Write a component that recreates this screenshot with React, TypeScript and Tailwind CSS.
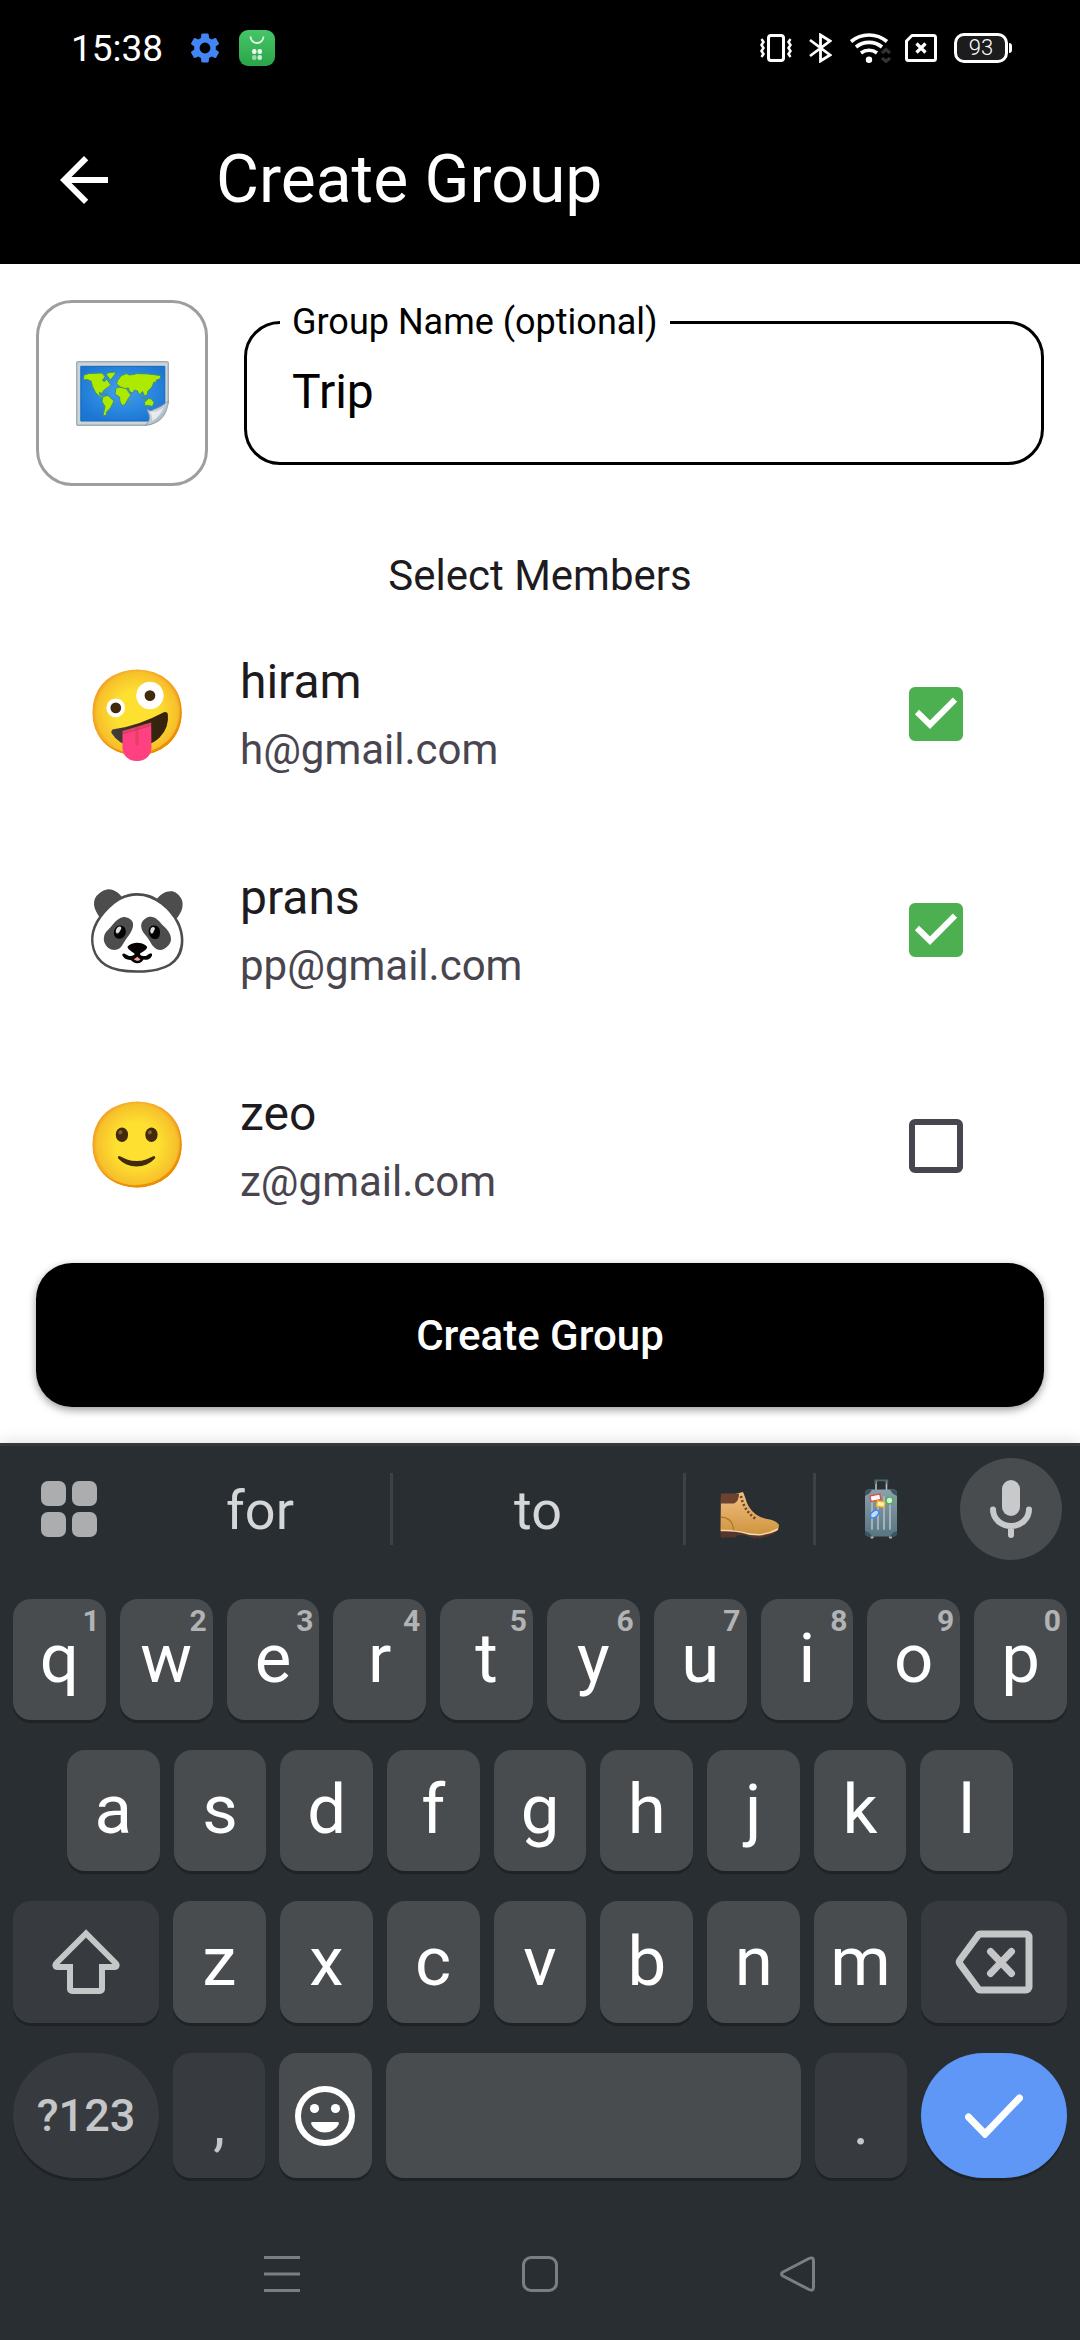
import { useState } from "react";
import type { ReactNode } from "react";

const EMOJI = "font-['Noto_Color_Emoji',sans-serif]";

type Member = { emoji: string; name: string; email: string; selected: boolean };

const MEMBERS: Member[] = [
  { emoji: "🤪", name: "hiram", email: "h@gmail.com", selected: true },
  { emoji: "🐼", name: "prans", email: "pp@gmail.com", selected: true },
  { emoji: "🙂", name: "zeo", email: "z@gmail.com", selected: false },
];

function WorldMapIcon() {
  return (
    <svg className="h-[65px] w-[93px]" viewBox="0 0 93 65" aria-hidden="true">
      <defs>
        <radialGradient id="sea" cx="0.5" cy="0.45" r="0.6">
          <stop offset="0" stopColor="#42a0f0" />
          <stop offset="1" stopColor="#1a76d2" />
        </radialGradient>
        <linearGradient id="curl" x1="0" y1="0" x2="1" y2="1">
          <stop offset="0.2" stopColor="#dfe4e7" />
          <stop offset="0.5" stopColor="#c3cdd3" />
          <stop offset="1" stopColor="#8c9ba3" />
        </linearGradient>
      </defs>
      <path d="M2 .7h89q1.300 0 1.300 1.500V41Q84 63 69 64.300H2Q.7 64.300.7 63V2Q.7.7 2 .7z" fill="#ccd4d9" stroke="#9fadb4" strokeWidth="1.400" />
      <path d="M4.800 5.300h84V44L75 60H4.800z" fill="url(#sea)" stroke="#1768b5" strokeWidth="1" />
      <g fill="#aeea00" stroke="#3f8f7a" strokeWidth="1" strokeLinejoin="round">
        <path d="M8 14l5-1.500 13-.5 3 3.500-2.500 4 2 1 2-2.500 4.500 6-4 3-3.500 2.500-1 3-3-1 .5 3 3 .5.5 2-4-1.500-4-4-3-6-1.500-5.500-4-1.500-3.500.5z" />
        <path d="M30 13l3-1.500 7-.5-1.500 3-4 5-2.500-3z" />
        <path d="M27 35.500l5-1 6 5.500-3.500 7-4 4-.5 3.500h-3l2-9-3-5z" />
        <path d="M40 27l4-1 6 1 4 6h1.500l-3.500 5-3 5.500-3 1-2-4-.5-4.500-4.500-3z" />
        <path d="M40.500 23l1-3.500 4-5 5-2 3 1.500 8-1.500 11 .5 12 1.500v3l-4 1.500-1 3-1.500-1-2 5-4 4-1 4-2.500 1-2-4.500-3 3.500-2-4-3-1-2 3-3-1.500-1-3.500-4 .5-4-1.500z" />
        <path d="M68.500 41l4-3.500 3 .5 2.500 3.500-1.500 4-4-1-3.500.5zM65 36l5 2-1 .8zM53 41.500l1.500-1.500-.5 3.500zM26 32l6 1.500" />
        <path d="M82 45l2-1.500" />
      </g>
      <path d="M71 48.500l3.500 1.500Q86 46 92.500 40 90 63 69 64.300 77 59 71 48.500z" fill="url(#curl)" stroke="#8c9ba3" strokeWidth=".9" />
      <path d="M74 51q8 .5 14-5-4 10-12 14 1-5-2-9z" fill="#f0f3f5" opacity=".8" />
    </svg>
  );
}

function BootIcon() {
  return (
    <svg className="h-[47px] w-[60px]" viewBox="0 0 60 47" aria-hidden="true">
      <defs>
        <linearGradient id="leather" x1="0" y1="0" x2="0" y2="1">
          <stop offset="0" stopColor="#f3c083" />
          <stop offset="1" stopColor="#cf943f" />
        </linearGradient>
      </defs>
      <path d="M.5 38v7l3 1 2-1 3 1 3-1 3 1 3-2.500 6-.5 7 2 4 1.500 3-1 3 .8 3-1.500 3 .3 3-2 3-.3 5-4z" fill="#54362c" />
      <path d="M1 2h14l8-2 2 5q3 12 11 17.500 5 3.500 14 5 7 1.500 9 5.500 0 6-5 7-8 2.500-16 2.500-9-.5-17-3.500-7-1.500-20.500-1z" fill="url(#leather)" />
      <path d="M1 1.500h18q0 8-5 10H.8z" fill="#6d4330" />
      <path d="M.7 38.500q13-.5 21 1.500 8 3 18 2.800Q49 42 58 37" fill="none" stroke="#f6d9a8" strokeWidth="1.500" />
      <path d="M1 25q12 1 12.500 13" fill="none" stroke="#b07b26" strokeWidth="1.300" />
      <path d="M21 4q3 15 15 23" fill="none" stroke="#68462c" strokeWidth="2.600" strokeDasharray="2 2.200" />
    </svg>
  );
}

function SuitcaseIcon() {
  return (
    <svg className="h-[60px] w-8" viewBox="0 0 32 60" aria-hidden="true">
      <defs>
        <linearGradient id="shell" x1="0" y1="0" x2="0" y2="1">
          <stop offset="0" stopColor="#8ba0aa" />
          <stop offset="1" stopColor="#587581" />
        </linearGradient>
      </defs>
      <path d="M11 11V1.500M21.500 11V1.500" stroke="#b3bec4" strokeWidth="1.600" />
      <path d="M10.300 5V1.300h12V5" fill="none" stroke="#4c6570" strokeWidth="1.800" />
      <circle cx="7" cy="58" r="1.700" fill="#c5a8a0" />
      <circle cx="25.500" cy="58" r="1.700" fill="#c5a8a0" />
      <rect y="10.500" width="32" height="47" rx="4" fill="url(#shell)" />
      <path d="M0 17v-3q0-3.500 3.500-3.500H7Q5 15 0 17zM32 17v-3q0-3.500-3.500-3.500H25q2 4.500 7 6.500zM0 52v2q0 3.500 3.500 3.500H7Q5 53 0 52zM32 52v2q0 3.500-3.500 3.500H25q2-4.500 7-5.500z" fill="#3d5561" />
      <path d="M7 18v32M13 18v32M19 18v32M25 18v32" stroke="#a8b8c0" strokeWidth="1.800" strokeLinecap="round" />
      <rect x="5.500" y="16" width="10" height="5.500" fill="#fff" stroke="#e5483d" strokeWidth="1.300" transform="rotate(-12 10.500 19)" />
      <rect x="12" y="22.500" width="7.500" height="5" fill="#fff3c4" stroke="#fbb917" strokeWidth="1.400" transform="rotate(10 15.500 25)" />
      <circle cx="24.500" cy="21.500" r="3.300" fill="#d3f5d5" stroke="#45b255" strokeWidth="1.300" />
      <ellipse cx="9.600" cy="35" rx="4.800" ry="2.900" fill="#bfdcff" stroke="#3f84f0" strokeWidth="1.400" transform="rotate(-42 9.600 35)" />
    </svg>
  );
}

function StatusBar() {
  return (
    <div className="flex h-24 items-center justify-between pr-[68px] pl-[71px] text-white">
      <div className="flex items-center">
        <span className="text-[37px] leading-none">15:38</span>
        <svg className="ml-[27px] size-[30px]" viewBox="2 2 20 20" fill="#4285f4" aria-hidden="true">
          <path d="M19.14 12.94c.04-.3.06-.61.06-.94 0-.32-.02-.64-.07-.94l2.03-1.58a.49.49 0 0 0 .12-.61l-1.92-3.32a.488.488 0 0 0-.59-.22l-2.39.96c-.5-.38-1.03-.7-1.62-.94l-.36-2.54a.484.484 0 0 0-.48-.41h-3.84c-.24 0-.43.17-.47.41l-.36 2.54c-.59.24-1.13.57-1.62.94l-2.39-.96c-.22-.08-.47 0-.59.22L2.74 8.87c-.12.21-.08.47.12.61l2.03 1.58c-.05.3-.09.63-.09.94s.02.64.07.94l-2.03 1.58a.49.49 0 0 0-.12.61l1.92 3.32c.12.22.37.29.59.22l2.39-.96c.5.38 1.03.7 1.62.94l.36 2.54c.05.24.24.41.48.41h3.84c.24 0 .44-.17.47-.41l.36-2.54c.59-.24 1.13-.56 1.62-.94l2.39.96c.22.08.47 0 .59-.22l1.92-3.32c.12-.22.07-.47-.12-.61l-2.01-1.58zM12 15.6A3.6 3.6 0 1 1 12 8.4a3.6 3.6 0 0 1 0 7.2z" />
        </svg>
        <svg className="ml-[19px] size-9" viewBox="0 0 36 36" aria-hidden="true">
          <defs>
            <linearGradient id="market" x1="0" y1="0" x2="0" y2="1">
              <stop offset="0" stopColor="#45c665" />
              <stop offset="1" stopColor="#2aa54a" />
            </linearGradient>
          </defs>
          <rect width="36" height="36" rx="9" fill="url(#market)" />
          <path d="M11.5 6.5a6.5 6.5 0 0 0 13 0" fill="none" stroke="#e3f8e6" strokeWidth="1.8" />
          <rect x="13" y="19" width="4.5" height="5" rx="2" fill="#e9faeb" />
          <rect x="18.5" y="19" width="4.5" height="5" rx="2" fill="#e9faeb" />
          <rect x="13" y="25" width="4.5" height="5" rx="2" fill="#95d9a4" />
          <rect x="18.5" y="25" width="4.5" height="5" rx="2" fill="#c8efcf" />
        </svg>
      </div>
      <div className="flex items-center">
        <svg className="h-[30px] w-8" viewBox="0 0 32 30" fill="none" stroke="#fff" aria-hidden="true">
          <rect x="8.500" y="2.500" width="15" height="25" rx="2.500" strokeWidth="3" />
          <path d="M1.500 6l2 3-2 3 2 3-2 3 2 3-2 3M30.500 6l-2 3 2 3-2 3 2 3-2 3 2 3" strokeWidth="2.500" />
        </svg>
        <svg className="ml-4 h-[30px] w-6" viewBox="0 0 24 30" fill="none" stroke="#fff" strokeWidth="2.800" aria-hidden="true">
          <path d="M2 7l20 15-9.500 6V2L22 8 2 23" />
        </svg>
        <svg className="ml-[18px] h-[30px] w-[42px]" viewBox="0 0 42 30" fill="none" aria-hidden="true">
          <path d="M1 8.500a28 28 0 0 1 36 0M6 14a20.500 20.500 0 0 1 26 0M11 20a13 13 0 0 1 16 0" stroke="#fff" strokeWidth="3.600" />
          <circle cx="19" cy="26.700" r="3.200" fill="#fff" />
          <path d="M32 20l4-3.500 4 3.500M32 25l4 3.500 4-3.500" stroke="#333" strokeWidth="3" />
        </svg>
        <svg className="ml-[13px] h-[30px] w-8" viewBox="0 0 32 30" fill="none" stroke="#fff" aria-hidden="true">
          <path d="M7 2.500h21.500a2 2 0 0 1 2 2v21a2 2 0 0 1-2 2h-25a2 2 0 0 1-2-2V8z" strokeWidth="3" strokeLinejoin="round" />
          <path d="M11.500 10.500l9 9M20.500 10.500l-9 9" strokeWidth="3.200" />
        </svg>
        <div className="ml-[17px] flex h-[30px] w-[54px] items-center justify-center rounded-[10px] border-3 border-white bg-[#1c1c1c] text-[22px] leading-none font-light">
          93
        </div>
        <div className="ml-px h-[10px] w-[3px] rounded-r-sm bg-white" />
      </div>
    </div>
  );
}

function MemberRow({ member, onToggle }: { member: Member; onToggle: () => void }) {
  return (
    <label className="flex h-54 items-center pr-[117px] pl-21">
      <span className={`flex w-27 shrink-0 justify-center text-[84px] leading-none ${EMOJI}`}>{member.emoji}</span>
      <span className="ml-12 flex min-w-0 flex-1 flex-col pt-1">
        <span className="text-[48px] leading-[68px] text-[#1d1b20]">{member.name}</span>
        <span className="text-[42px] leading-[68px] text-[#49454f]">{member.email}</span>
      </span>
      <span className="relative size-[54px] shrink-0">
        <input
          type="checkbox"
          checked={member.selected}
          onChange={onToggle}
          className="peer block size-full appearance-none rounded-md border-6 border-[#49454f] checked:border-[#4caf50] checked:bg-[#4caf50]"
        />
        <svg
          className="pointer-events-none absolute inset-0 hidden size-full peer-checked:block"
          viewBox="0 0 54 54"
          fill="none"
          stroke="#fff"
          strokeWidth="6"
          aria-hidden="true"
        >
          <path d="M8 25l13 12.700L46 12.700" />
        </svg>
      </span>
    </label>
  );
}

function Key({
  children,
  label,
  hint,
  tone = "light",
  onPress,
}: {
  children?: ReactNode;
  label: string;
  hint?: string;
  tone?: "light" | "dark" | "space";
  onPress?: () => void;
}) {
  const tones = {
    light: "flex-1 bg-[#484c4f] text-white",
    dark: "flex-1 bg-[#373b3f] text-[#c4c6c8]",
    space: "w-[415px] shrink-0 bg-[#484c4f]",
  };
  return (
    <button
      type="button"
      aria-label={label}
      onClick={onPress}
      className={`relative flex h-full min-w-0 items-center justify-center rounded-[18px] text-[69px] leading-none shadow-[0_3px_0_#1f2326] ${tones[tone]}`}
    >
      {children}
      {hint && <span className="absolute top-[7px] right-[6px] text-[30px] leading-none font-bold text-[#b1b3b5]">{hint}</span>}
    </button>
  );
}

const WIDE = "flex h-full w-[146px] shrink-0 items-center justify-center shadow-[0_3px_0_#1f2326]";

function Keyboard({ onType, onDelete }: { onType: (text: string) => void; onDelete: () => void }) {
  const letters = (row: string, hints = "") =>
    row.split("").map((c, i) => (
      <Key key={c} label={c} hint={hints[i]} onPress={() => onType(c)}>
        <span className="pb-[2px]">{c}</span>
      </Key>
    ));
  return (
    <section aria-label="Keyboard" className="border-t-3 border-[#34393c] bg-[#292e32] shadow-[0_0_15px_rgba(0,0,0,0.15)]">
      <div className="flex h-[126px] items-center text-[54px] leading-none text-[#d5d6d7]">
        <button type="button" aria-label="Keyboard menu" className="flex w-[130px] shrink-0 pl-[41px]">
          <span className="grid grid-cols-2 gap-[6px]">
            <span className="size-[25px] rounded-[7px] bg-[#abadaf]" />
            <span className="size-[25px] rounded-[7px] bg-[#abadaf]" />
            <span className="size-[25px] rounded-[7px] bg-[#abadaf]" />
            <span className="size-[25px] rounded-[7px] bg-[#abadaf]" />
          </span>
        </button>
        <button type="button" className="h-18 w-[260px] pt-1">for</button>
        <span className="h-18 w-[3px] bg-[#3d4246]" />
        <button type="button" className="h-18 flex-1 pt-1">to</button>
        <span className="h-18 w-[3px] bg-[#3d4246]" />
        <button type="button" aria-label="Hiking boot emoji" onClick={() => onType("🥾")} className="flex h-18 w-[127px] items-center justify-center pt-3">
          <BootIcon />
        </button>
        <span className="h-18 w-[3px] bg-[#3d4246]" />
        <button type="button" aria-label="Luggage emoji" onClick={() => onType("🧳")} className="flex h-18 w-[130px] items-center justify-center">
          <SuitcaseIcon />
        </button>
        <button type="button" aria-label="Voice input" className="mr-[18px] ml-[14px] flex size-[102px] shrink-0 items-center justify-center rounded-full bg-[#484c4f]">
          <svg className="h-[58px] w-[42px]" viewBox="0 0 42 58" aria-hidden="true">
            <rect x="12" width="18" height="36" rx="9" fill="#c8c9cb" />
            <path d="M3 29.500a18 16.500 0 0 0 36 0M21 47v8" fill="none" stroke="#c8c9cb" strokeWidth="6" strokeLinecap="round" />
          </svg>
        </button>
      </div>

      <div className="flex flex-col gap-[30px] px-[13px] pt-[27px]">
        <div className="flex h-[121px] gap-[14px]">{letters("qwertyuiop", "1234567890")}</div>
        <div className="flex h-[121px] gap-[14px] px-[54px]">{letters("asdfghjkl")}</div>
        <div className="flex h-[122px] gap-[14px]">
          <button type="button" aria-label="Shift" className={`${WIDE} rounded-[18px] bg-[#373b3f]`}>
            <svg className="h-[66px] w-[68px]" viewBox="0 0 68 66" fill="none" stroke="#c4c6c8" strokeWidth="6" aria-hidden="true">
              <path d="M34 4.500L4.500 34c-2 2-1 4 1 4H18v22a2 2 0 0 0 2 2h28a2 2 0 0 0 2-2V38h12.500c2 0 3-2 1-4z" />
            </svg>
          </button>
          {letters("zxcvbnm")}
          <button type="button" aria-label="Backspace" onClick={onDelete} className={`${WIDE} rounded-[18px] bg-[#373b3f]`}>
            <svg className="h-16 w-[78px]" viewBox="0 0 78 64" fill="none" stroke="#c4c6c8" strokeWidth="7" strokeLinejoin="round" strokeLinecap="round" aria-hidden="true">
              <path d="M26 4h45a3 3 0 0 1 3 3v50a3 3 0 0 1-3 3H26a3 3 0 0 1-3-1.500L5 34q-1.500-2 0-4L23 5.500A3 3 0 0 1 26 4z" />
              <path d="M35.500 21.500l21 22M56.500 21.500l-21 22" />
            </svg>
          </button>
        </div>
        <div className="flex h-[125px] gap-[14px]">
          <button type="button" className={`${WIDE} rounded-full bg-[#373b3f] text-[45px] leading-none font-medium text-[#c4c6c8]`}>
            ?123
          </button>
          <Key label="Comma" tone="dark" onPress={() => onType(",")}>
            <span className="pt-4 text-[60px]">,</span>
          </Key>
          <Key label="Emoji">
            <svg className="size-15" viewBox="0 0 60 60" aria-hidden="true">
              <circle cx="30" cy="30" r="27" fill="none" stroke="#fff" strokeWidth="6" />
              <circle cx="19.500" cy="22.500" r="4.600" fill="#fff" />
              <circle cx="40.500" cy="22.500" r="4.600" fill="#fff" />
              <path d="M17.500 36h25q2 0 1.300 2C41 43.500 36 46.500 30 46.500S19 43.500 16.200 38q-.7-2 1.300-2z" fill="#fff" />
            </svg>
          </Key>
          <Key label="Space" tone="space" onPress={() => onType(" ")} />
          <Key label="Period" tone="dark" onPress={() => onType(".")}>
            <span className="pt-4 text-[60px]">.</span>
          </Key>
          <button type="button" aria-label="Done" className={`${WIDE} rounded-full bg-[#5e97f6]`}>
            <svg className="h-[44px] w-[58px]" viewBox="0 0 58 44" fill="none" stroke="#fff" strokeWidth="7" strokeLinecap="round" aria-hidden="true">
              <path d="M3.500 23L20 40 54.500 4" strokeLinejoin="miter" />
            </svg>
          </button>
        </div>
      </div>

      <nav aria-label="System" className="flex h-[162px] items-center justify-center gap-[222px] pt-[30px] text-[#7b7f82]">
        <button type="button" aria-label="Recent apps">
          <svg className="size-9" viewBox="0 0 36 36" stroke="currentColor" strokeWidth="3" aria-hidden="true">
            <path d="M0 1.500h36M0 18h36M0 34.500h36" />
          </svg>
        </button>
        <button type="button" aria-label="Home" className="size-9 rounded-[9px] border-3 border-current" />
        <button type="button" aria-label="Back">
          <svg className="size-9" viewBox="0 0 36 36" fill="none" stroke="currentColor" strokeWidth="3" strokeLinejoin="round" aria-hidden="true">
            <path d="M29 2.500q4.500-2 4.500 2.500v26q0 4.500-4.500 2.500L3 20q-3-2 0-4z" />
          </svg>
        </button>
      </nav>
    </section>
  );
}

export default function App() {
  const [name, setName] = useState("Trip");
  const [members, setMembers] = useState(MEMBERS);

  const toggle = (index: number) =>
    setMembers((list) => list.map((m, i) => (i === index ? { ...m, selected: !m.selected } : m)));

  return (
    <div className="flex min-h-screen flex-col bg-white font-[Roboto,sans-serif]">
      <header className="bg-black text-white">
        <StatusBar />
        <div className="flex h-42 items-center pl-15">
          <button type="button" aria-label="Back">
            <svg className="size-12" viewBox="4 4 16 16" fill="currentColor" aria-hidden="true">
              <path d="M20 11H7.830l5.590-5.590L12 4l-8 8 8 8 1.410-1.410L7.830 13H20v-2z" />
            </svg>
          </button>
          <h1 className="ml-27 text-[66px] leading-[84px]">Create Group</h1>
        </div>
      </header>

      <main className="flex flex-1 flex-col pt-9">
        <div className="flex items-start gap-9 px-9">
          <button
            type="button"
            aria-label="Choose group icon"
            className="flex h-[186px] w-[172px] shrink-0 items-center justify-center rounded-[36px] border-3 border-[#9e9e9e]"
          >
            <WorldMapIcon />
          </button>
          <fieldset className="min-w-0 flex-1 rounded-[36px] border-3 border-black pb-6">
            <legend className="ml-[33px] px-3">
              <label htmlFor="group-name" className="block text-[36px] leading-[45px]">
                Group Name (optional)
              </label>
            </legend>
            <input
              id="group-name"
              value={name}
              onChange={(e) => setName(e.target.value)}
              className="block h-[93px] w-full bg-transparent px-[45px] text-[48px] text-black outline-none"
            />
          </fieldset>
        </div>

        <h2 className="mt-15 text-center text-[42px] leading-[60px] text-[#1d1b20]">Select Members</h2>

        <div className="flex flex-1 flex-col">
          {members.map((m, i) => (
            <MemberRow key={m.email} member={m} onToggle={() => toggle(i)} />
          ))}
        </div>

        <div className="px-9 pt-2 pb-9">
          <button
            type="button"
            className="h-36 w-full rounded-[36px] bg-black text-[42px] font-medium text-white shadow-[0_3px_8px_rgba(0,0,0,0.4)]"
          >
            Create Group
          </button>
        </div>
      </main>

      <Keyboard onType={(t) => setName((n) => n + t)} onDelete={() => setName((n) => n.slice(0, -1))} />
    </div>
  );
}
